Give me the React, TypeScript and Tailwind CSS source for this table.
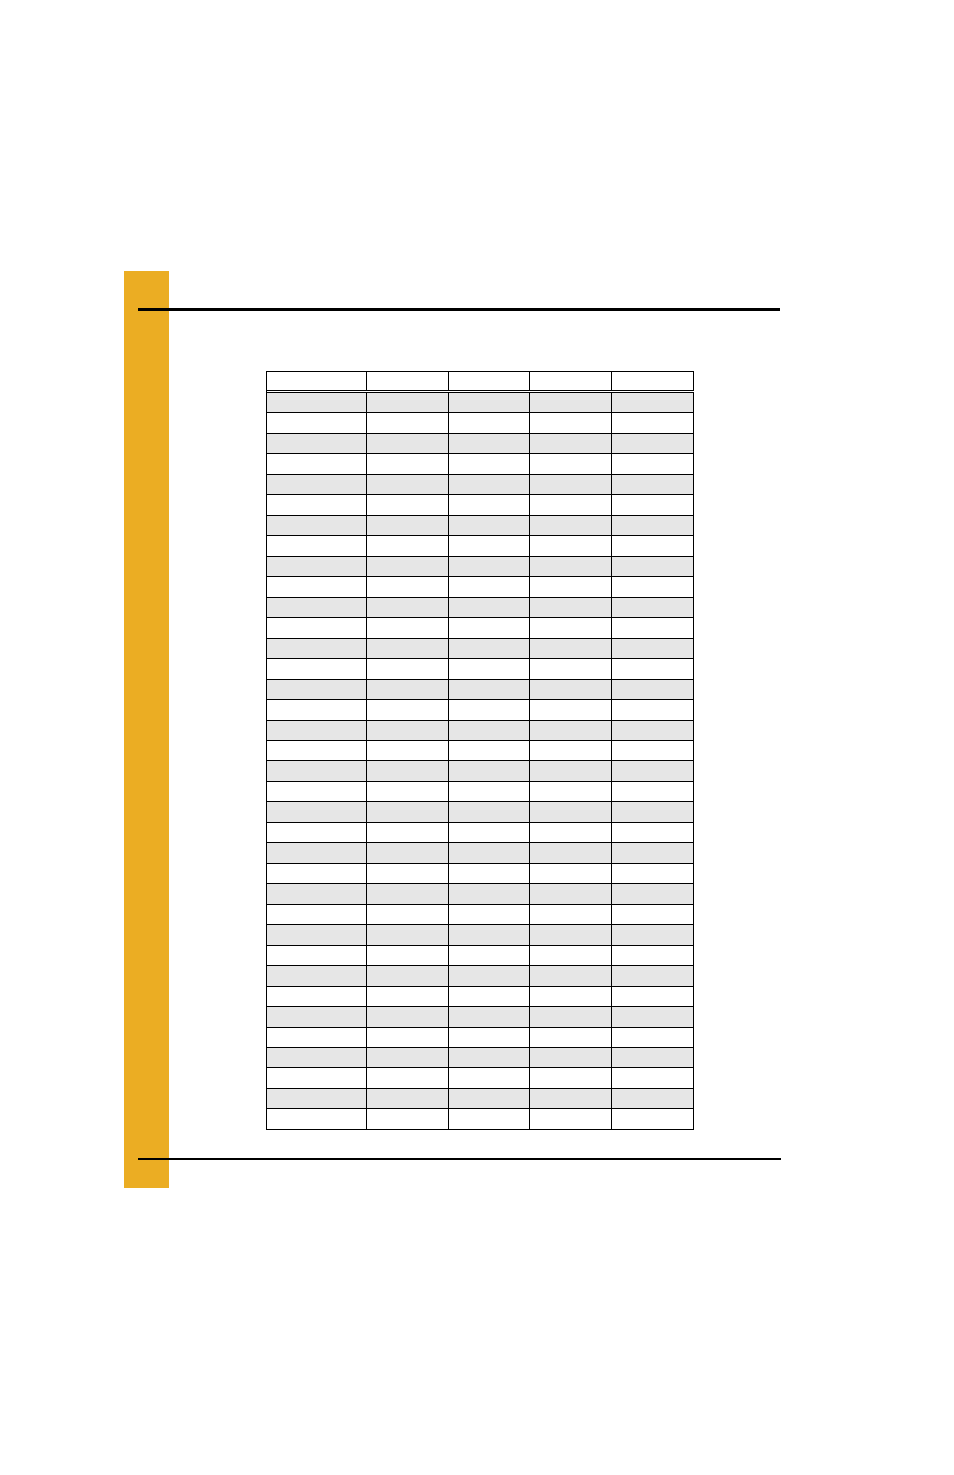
import React from 'react';

const rows = Array.from({ length: 36 }, (_, i) => i);
const cols = [0, 1, 2, 3, 4];

export default function App() {
  return (
    <div className="w-[954px] h-[1475px] bg-white pt-[271px] pl-[124px] font-['Liberation_Sans',sans-serif]">
      <div className="flex">
        <div className="w-[45px] h-[917px] shrink-0 bg-[#ebad23]" />
        <div className="ml-[-31px] flex flex-col pt-[37px] relative">
          <div className="w-[642px] h-[3px] bg-black" />
          <div className="ml-[128px] mt-[60px] w-[428px] border-l border-t border-black">
            <div className="grid grid-cols-[100px_82px_81px_82px_82px] h-[18px] border-b-[3px] border-double border-black box-content">
              {cols.map((c) => (
                <div key={c} className="border-r border-black" />
              ))}
            </div>
            {rows.map((r) => (
              <div
                key={r}
                className={`grid grid-cols-[100px_82px_81px_82px_82px] h-[20.47px] border-b border-black ${
                  r % 2 === 0 ? 'bg-[#e6e6e6]' : 'bg-white'
                }`}
              >
                {cols.map((c) => (
                  <div key={c} className="border-r border-black" />
                ))}
              </div>
            ))}
          </div>
          <div className="w-[643px] h-[2px] mt-[28px] bg-black" />
        </div>
      </div>
    </div>
  );
}
